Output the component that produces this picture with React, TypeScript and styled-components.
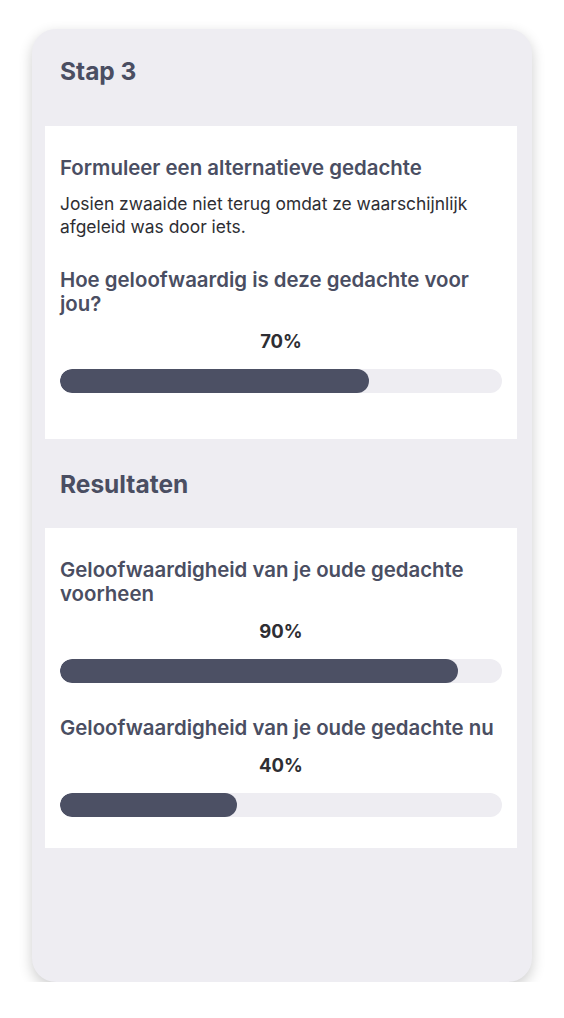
import React from 'react';
import styled, { createGlobalStyle } from 'styled-components';

const GlobalStyle = createGlobalStyle`
  body {
    margin: 0;
    background: #ffffff;
    font-family: Inter, "Noto Sans", sans-serif;
  }
`;

const Panel = styled.div`
  margin: 29px 32px 0;
  height: 953px;
  box-sizing: border-box;
  padding: 27px 15px 0 13px;
  background-color: #eeedf2;
  border-radius: 24px;
  box-shadow: 0 5px 14px rgba(0, 0, 0, 0.2);
`;

const SectionTitle = styled.h1<{ $gap: number }>`
  margin: 0 0 ${(p) => p.$gap}px;
  padding-left: 15px;
  font-size: 24.5px;
  line-height: 30px;
  font-weight: 700;
  color: #4a4e62;
`;

const Card = styled.div<{ $bottom: number }>`
  background: #ffffff;
  padding: 30px 15px ${(p) => p.$bottom}px;
  margin-bottom: 30px;
`;

const Heading = styled.h2<{ $top?: number }>`
  margin: ${(p) => p.$top ?? 0}px 0 0;
  font-size: 20.4px;
  line-height: 24px;
  font-weight: 600;
  color: #4a4e62;
`;

const Body = styled.p`
  margin: 12px 0 0;
  font-size: 17.4px;
  line-height: 23px;
  color: #2e2e33;
`;

const Percent = styled.div`
  margin-top: 14px;
  text-align: center;
  font-size: 18.5px;
  line-height: 22px;
  font-weight: 700;
  color: #2e2e33;
`;

const Track = styled.div`
  margin-top: 17px;
  height: 24px;
  border-radius: 12px;
  background: #eeedf2;
  overflow: hidden;
`;

const Fill = styled.div`
  height: 100%;
  border-radius: 12px;
  background: #4c5064;
`;

const Meter: React.FC<{ value: number }> = ({ value }) => (
  <>
    <Percent>{value}%</Percent>
    <Track>
      <Fill style={{ width: `${value}%` }} />
    </Track>
  </>
);

const App: React.FC = () => (
  <>
    <GlobalStyle />
    <Panel>
      <SectionTitle $gap={40}>Stap 3</SectionTitle>
      <Card $bottom={46}>
        <Heading>Formuleer een alternatieve gedachte</Heading>
        <Body>Josien zwaaide niet terug omdat ze waarschijnlijk afgeleid was door iets.</Body>
        <Heading $top={30}>Hoe geloofwaardig is deze gedachte voor jou?</Heading>
        <Meter value={70} />
      </Card>
      <SectionTitle $gap={29}>Resultaten</SectionTitle>
      <Card $bottom={31}>
        <Heading>Geloofwaardigheid van je oude gedachte voorheen</Heading>
        <Meter value={90} />
        <Heading $top={33}>Geloofwaardigheid van je oude gedachte nu</Heading>
        <Meter value={40} />
      </Card>
    </Panel>
  </>
);

export default App;
